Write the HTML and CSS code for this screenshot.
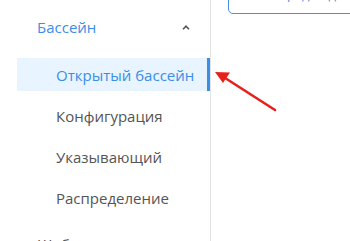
FILE: index.html
```html
<!DOCTYPE html>
<html lang="ru">
<head>
<meta charset="utf-8">
<link rel="stylesheet" href="styles.css">
</head>
<body>
<div class="page">
  <aside class="sidebar">
    <div class="group-header">
      <span class="group-title active">Бассейн</span>
      <svg class="chevron" width="8" height="5" viewBox="0 0 8 5"><path d="M1 4.2 L4 1.2 L7 4.2" fill="none" stroke="#555" stroke-width="1.6"/></svg>
    </div>
    <ul class="menu">
      <li class="menu-item selected">Открытый бассейн</li>
      <li class="menu-item">Конфигурация</li>
      <li class="menu-item">Указывающий</li>
      <li class="menu-item">Распределение</li>
    </ul>
    <div class="group-header">
      <span class="group-title">Шаблон</span>
    </div>
  </aside>
  <main class="content">
    <div class="btn">Упорядоч д</div>
  </main>
</div>
<svg class="arrow" width="80" height="60" viewBox="0 0 80 60">
  <line x1="65" y1="50" x2="12" y2="16" stroke="#e8201c" stroke-width="2.6" stroke-linecap="round"/>
  <path d="M5 12 L20 12.5 L13 23 Z" fill="#e8201c"/>
</svg>
</body>
</html>
```
FILE: styles.css
```css
html, body {
  margin: 0;
  padding: 0;
  background: #fff;
  overflow: hidden;
}
body {
  font-family: "Open Sans", "Noto Sans", sans-serif;
  width: 350px;
  height: 241px;
  position: relative;
}
.page {
  display: flex;
  height: 241px;
}
.sidebar {
  width: 210px;
  border-right: 1px solid #e4e4e4;
  padding-top: 4px;
  box-sizing: content-box;
  flex: none;
}
.group-header {
  height: 46px;
  display: flex;
  align-items: center;
  justify-content: space-between;
  padding: 0 20px 0 37px;
}
.group-title {
  font-size: 15px;
  color: #555;
}
.group-title.active {
  color: #3a8ee6;
}
.chevron {
  display: block;
  margin-top: 1px;
}
.menu {
  list-style: none;
  margin: 0;
  padding: 8px 0 7px;
  display: flex;
  flex-direction: column;
  gap: 8px;
}
.menu-item {
  height: 33px;
  margin-left: 17px;
  padding-left: 39px;
  display: flex;
  align-items: center;
  font-size: 15px;
  color: #555;
}
.menu-item.selected {
  background: #e8f4ff;
  color: #3a8ee6;
  border-right: 3px solid #3a8ee6;
}
.content {
  flex: 1;
  padding-left: 17px;
  overflow: hidden;
}
.btn {
  margin-top: -26px;
  height: 38px;
  border: 1px solid #4a90e2;
  border-radius: 5px;
  width: 160px;
  display: flex;
  align-items: center;
  padding-left: 34px;
  font-size: 13px;
  color: #4a90e2;
  white-space: nowrap;
}
.arrow {
  position: absolute;
  left: 210px;
  top: 60px;
}
```
